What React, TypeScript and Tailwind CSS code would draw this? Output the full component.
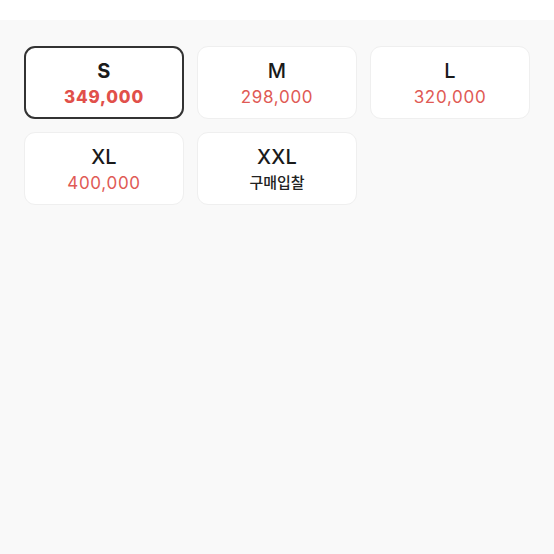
import React from "react";

const items = [
  { size: "S", price: "349,000", selected: true },
  { size: "M", price: "298,000" },
  { size: "L", price: "320,000" },
  { size: "XL", price: "400,000" },
  { size: "XXL", price: "구매입찰", bid: true },
];

export default function App() {
  return (
    <div className="w-[554px] h-[554px] bg-white flex flex-col" style={{ fontFamily: 'Inter, "Noto Sans CJK KR", sans-serif' }}>
      <div className="h-[20px] bg-white" />
      <div className="flex-1 bg-[#f9f9f9] px-6 pt-[26px]">
        <div className="grid grid-cols-3 gap-[13px]">
          {items.map((it) => (
            <div
              key={it.size}
              className={
                it.selected
                  ? "h-[73px] pt-[2px] rounded-[11px] bg-white border-2 border-[#333333] flex flex-col items-center justify-center"
                  : "h-[73px] pt-[2px] rounded-[11px] bg-white border border-[#efefef] flex flex-col items-center justify-center"
              }
            >
              <div className={it.selected ? "text-[20px] leading-[24px] font-bold text-[#1a1a1a] tracking-[0.2px]" : "text-[20px] leading-[24px] font-medium text-[#1a1a1a] tracking-[0.2px]"}>
                {it.size}
              </div>
              <div
                className={
                  it.bid
                    ? "mt-[3px] text-[15px] leading-[22px] font-medium text-[#222222]"
                    : it.selected
                    ? "mt-[3px] text-[17px] leading-[22px] font-extrabold text-[#e1504a] tracking-[0.8px]"
                    : "mt-[3px] text-[17px] leading-[22px] font-normal text-[#df5a55] tracking-[0.7px]"
                }
              >
                {it.price}
              </div>
            </div>
          ))}
        </div>
      </div>
    </div>
  );
}
